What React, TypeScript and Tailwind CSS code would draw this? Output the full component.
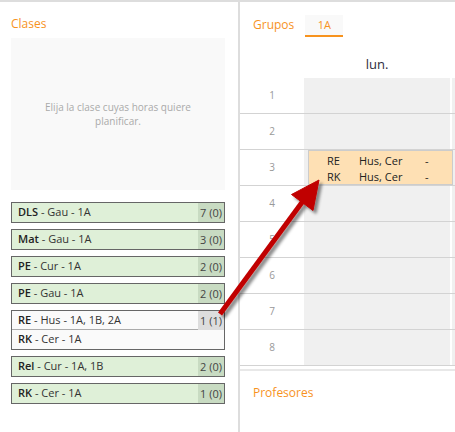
import React from "react";

type ClassItem = {
  lines: { code: string; rest: string }[];
  count: string;
  pending?: boolean;
};

const classes: ClassItem[] = [
  { lines: [{ code: "DLS", rest: " - Gau - 1A" }], count: "7 (0)" },
  { lines: [{ code: "Mat", rest: " - Gau - 1A" }], count: "3 (0)" },
  { lines: [{ code: "PE", rest: " - Cur - 1A" }], count: "2 (0)" },
  { lines: [{ code: "PE", rest: " - Gau - 1A" }], count: "2 (0)" },
  {
    lines: [
      { code: "RE", rest: " - Hus - 1A, 1B, 2A" },
      { code: "RK", rest: " - Cer - 1A" },
    ],
    count: "1 (1)",
    pending: true,
  },
  { lines: [{ code: "Rel", rest: " - Cur - 1A, 1B" }], count: "2 (0)" },
  { lines: [{ code: "RK", rest: " - Cer - 1A" }], count: "1 (0)" },
];

const hours = [1, 2, 3, 4, 5, 6, 7, 8];

function Label({ code, rest }: { code: string; rest: string }) {
  return (
    <span className="whitespace-pre">
      <span className="font-semibold text-[#222]">{code}</span>
      <span className="text-[#333]">{rest}</span>
    </span>
  );
}

function ClassCard({ item }: { item: ClassItem }) {
  if (item.pending) {
    return (
      <div className="flex border border-[#666] bg-[#fafafa]">
        <div className="flex-1">
          {item.lines.map((l, i) => (
            <div
              key={i}
              className={`flex h-[19px] items-center pl-[6px] ${i === 0 ? "border-b border-[#aaa]" : ""}`}
            >
              <Label code={l.code} rest={l.rest} />
            </div>
          ))}
        </div>
        <div className="h-[19px] w-[26px] bg-[#dddddd] pr-[2px] text-right leading-[19px] text-[#444]">
          {item.count}
        </div>
      </div>
    );
  }
  return (
    <div className="flex h-[21px] border border-[#666] bg-[#dff0d8]">
      <div className="flex flex-1 items-center pl-[6px]">
        <Label code={item.lines[0].code} rest={item.lines[0].rest} />
      </div>
      <div className="w-[26px] bg-[#c8dbc2] pr-[2px] text-right leading-[19px] text-[#444]">
        {item.count}
      </div>
    </div>
  );
}

export default function App() {
  return (
    <div
      className="relative flex h-[432px] w-[455px] overflow-hidden border-t-2 border-[#dddddd] bg-white text-[11px]"
      style={{ fontFamily: '"Open Sans", "Liberation Sans", sans-serif' }}
    >
      {/* Left: classes */}
      <div className="w-[240px] shrink-0 border-r-2 border-[#dddddd] px-[11px]">
        <div className="pt-[14px] text-[12px] leading-[16px] text-[#f7931e]">Clases</div>
        <div className="mt-[6px] flex h-[152px] w-[214px] items-center justify-center bg-[#f9f9f9] px-[20px] text-center text-[10px] leading-[14px] text-[#aaaaaa]">
          Elija la clase cuyas horas quiere planificar.
        </div>
        <div className="mt-[12px] flex w-[214px] flex-col gap-[6px]">
          {classes.map((c, i) => (
            <ClassCard key={i} item={c} />
          ))}
        </div>
      </div>

      {/* Right: groups + teachers */}
      <div className="flex flex-1 flex-col">
        <div className="flex items-end pl-[13px] pt-[13px]">
          <div className="pb-[4px] text-[12px] leading-[16px] text-[#f7931e]">Grupos</div>
          <div className="ml-[11px] flex h-[22px] w-[38px] items-center justify-center border-b-2 border-[#f7931e] bg-[#f9f9f9] text-[11px] text-[#f7931e]">
            1A
          </div>
        </div>

        <div className="flex h-[41px]">
          <div className="w-[64px]" />
          <div className="flex w-[146px] items-end justify-center pb-[5px] text-[13px] leading-[18px] text-[#2d2d3d]">
            lun.
          </div>
        </div>

        <div className="flex flex-col">
          {hours.map((h) => (
            <div key={h} className="flex h-[36px] border-b border-[#d3d3d3]">
              <div className="flex w-[64px] items-center justify-center text-[10px] text-[#999]">
                {h}
              </div>
              <div className="relative w-[146px] bg-[#f0f0f0]">
                {h === 3 && (
                  <div className="absolute left-[4px] top-0 z-10 h-[35px] w-[145px] border border-[#cccccc] bg-[#fee0b4] pt-[2px] text-[11px] leading-[16px] text-[#222]">
                    {["RE", "RK"].map((code) => (
                      <div key={code} className="flex">
                        <span className="w-[50px] pl-[18px]">{code}</span>
                        <span className="w-[66px]">Hus, Cer</span>
                        <span>-</span>
                      </div>
                    ))}
                  </div>
                )}
              </div>
              <div className="w-[2px] bg-white" />
              <div className="flex-1 bg-[#f0f0f0]" />
            </div>
          ))}
        </div>

        <div className="mt-[3px] border-t-2 border-[#e8e8e8] pl-[13px] pt-[14px] text-[12px] leading-[16px] text-[#f7931e]">
          Profesores
        </div>
      </div>

      {/* Drag hint arrow */}
      <svg
        className="pointer-events-none absolute left-0 top-[-2px] z-20"
        width="455"
        height="432"
        viewBox="0 0 455 432"
      >
        <defs>
          <filter id="shadow" x="-20%" y="-20%" width="140%" height="140%">
            <feDropShadow dx="3" dy="3" stdDeviation="1.8" floodColor="#000" floodOpacity="0.45" />
          </filter>
        </defs>
        <g filter="url(#shadow)" fill="#c00000" stroke="#c00000">
          <line x1="220" y1="314" x2="303" y2="201" strokeWidth="5" />
          <polygon points="319,180 291.5,194.5 313,210.5" strokeWidth="1" />
        </g>
      </svg>
    </div>
  );
}
